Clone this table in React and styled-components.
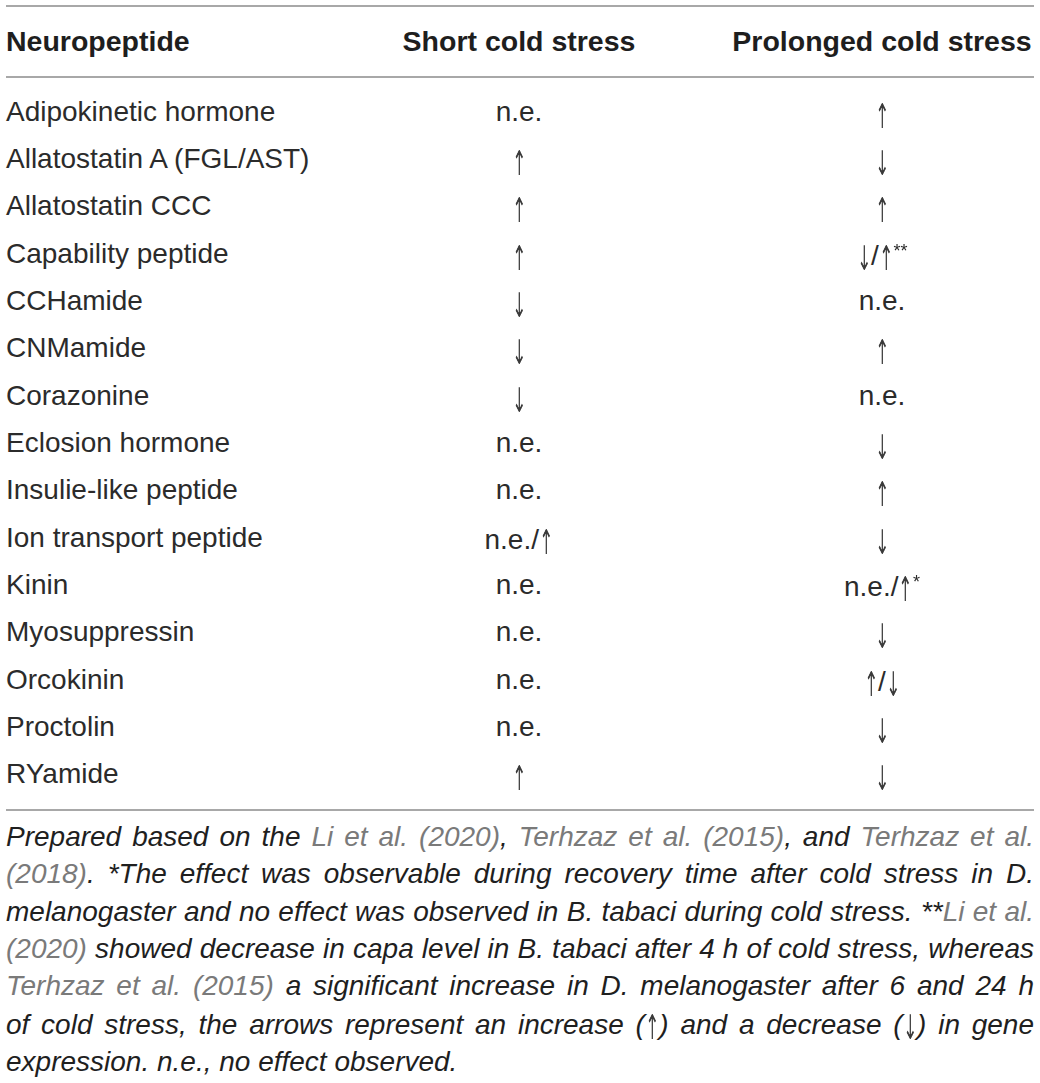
import React from "react";
import styled, { createGlobalStyle } from "styled-components";

const Global = createGlobalStyle`
  html, body { margin: 0; padding: 0; background: #ffffff; }
  body { font-family: "Liberation Sans", Arial, Helvetica, sans-serif; color: #262626; }
`;

const Page = styled.div`
  width: 1028px;
  padding: 5px 6px 0 6px;
`;

const Table = styled.div`
  border-top: 2px solid #a8a8a8;
  border-bottom: 2px solid #a8a8a8;
`;

const COLS = "302px 422px 304px";

const HeadRow = styled.div`
  display: grid;
  grid-template-columns: ${COLS};
  height: 69px;
  align-items: center;
  border-bottom: 2px solid #a8a8a8;
`;

const HeadCell = styled.div`
  font-weight: 700;
  font-size: 28.5px;
  color: #1e1e1e;
  text-align: ${(p) => p.$align || "center"};
  white-space: nowrap;
`;

const Body = styled.div`
  display: grid;
  grid-template-columns: ${COLS};
  grid-auto-rows: 47.33px;
  align-items: center;
  padding: 10px 0 11px;
`;

const Cell = styled.div`
  font-size: 28px;
  color: #2b2b2b;
  text-align: ${(p) => p.$align || "center"};
  white-space: nowrap;
`;

const Arrow = styled.span`
  font-family: "DejaVu Sans", sans-serif;
  font-style: normal;
  font-size: 34px;
  color: #3a3a3a;
  display: inline-block;
  line-height: 1;
  margin: 0 -7px;
  transform: translateY(5px) scaleX(0.5);
  will-change: transform;
`;

const Star = styled.sup`
  font-size: 18px;
  line-height: 0;
  vertical-align: 0;
  position: relative;
  top: -8px;
`;

const Caption = styled.div`
  padding-top: 7px;
  font-size: 28px;
  line-height: 37.33px;
  font-style: italic;
  color: #1f1f1f;
`;

const Line = styled.span`
  display: block;
  white-space: nowrap;
  text-align: justify;
  text-align-last: ${(p) => (p.$last ? "left" : "justify")};
`;

const Ref = styled.span`
  color: #7a7a7a;
`;

const rows = [
  ["Adipokinetic hormone", "n.e.", "↑"],
  ["Allatostatin A (FGL/AST)", "↑", "↓"],
  ["Allatostatin CCC", "↑", "↑"],
  ["Capability peptide", "↑", "↓/↑**"],
  ["CCHamide", "↓", "n.e."],
  ["CNMamide", "↓", "↑"],
  ["Corazonine", "↓", "n.e."],
  ["Eclosion hormone", "n.e.", "↓"],
  ["Insulie-like peptide", "n.e.", "↑"],
  ["Ion transport peptide", "n.e./↑", "↓"],
  ["Kinin", "n.e.", "n.e./↑*"],
  ["Myosuppressin", "n.e.", "↓"],
  ["Orcokinin", "n.e.", "↑/↓"],
  ["Proctolin", "n.e.", "↓"],
  ["RYamide", "↑", "↓"],
];

// split a value into text, arrow glyphs and trailing asterisks
const Value = ({ v }) => {
  const m = v.match(/^(.*?)(\*+)?$/);
  const main = m[1];
  const stars = m[2];
  const parts = main.split(/([↑↓])/).filter(Boolean);
  return (
    <>
      {parts.map((p, i) =>
        p === "↑" || p === "↓" ? <Arrow key={i}>{p}</Arrow> : <span key={i}>{p}</span>
      )}
      {stars && <Star>{stars}</Star>}
    </>
  );
};

export default function App() {
  return (
    <Page>
      <Global />
      <Table>
        <HeadRow>
          <HeadCell $align="left">Neuropeptide</HeadCell>
          <HeadCell>Short cold stress</HeadCell>
          <HeadCell>Prolonged cold stress</HeadCell>
        </HeadRow>
        <Body>
          {rows.map(([name, s, p]) => (
            <React.Fragment key={name}>
              <Cell $align="left">{name}</Cell>
              <Cell>
                <Value v={s} />
              </Cell>
              <Cell>
                <Value v={p} />
              </Cell>
            </React.Fragment>
          ))}
        </Body>
      </Table>
      <Caption>
        <Line>
          Prepared based on the <Ref>Li et al. (2020)</Ref>, <Ref>Terhzaz et al. (2015)</Ref>, and{" "}
          <Ref>Terhzaz et al.</Ref>
        </Line>
        <Line>
          <Ref>(2018)</Ref>. *The effect was observable during recovery time after cold stress in D.
        </Line>
        <Line>
          melanogaster and no effect was observed in B. tabaci during cold stress. **
          <Ref>Li et al.</Ref>
        </Line>
        <Line>
          <Ref>(2020)</Ref> showed decrease in capa level in B. tabaci after 4 h of cold stress, whereas
        </Line>
        <Line>
          <Ref>Terhzaz et al. (2015)</Ref> a significant increase in D. melanogaster after 6 and 24 h
        </Line>
        <Line>
          of cold stress, the arrows represent an increase (<Arrow>↑</Arrow>) and a decrease (
          <Arrow>↓</Arrow>) in gene
        </Line>
        <Line $last>expression. n.e., no effect observed.</Line>
      </Caption>
    </Page>
  );
}
